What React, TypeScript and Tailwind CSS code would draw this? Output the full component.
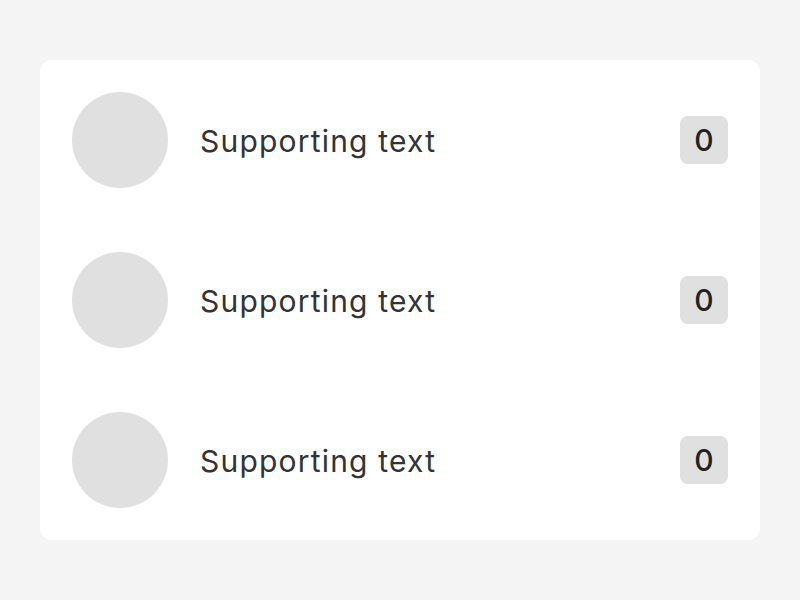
export default function App() {
  const rows = [0, 1, 2];
  return (
    <div className="min-h-[600px] w-[800px] bg-[#f4f4f4] p-[40px] pt-[60px]" style={{ fontFamily: "Inter, 'Noto Sans', sans-serif" }}>
      <div className="flex flex-col gap-[64px] rounded-[12px] bg-white p-[32px]">
        {rows.map((r) => (
          <div key={r} className="flex h-[96px] items-center">
            <div className="h-[96px] w-[96px] shrink-0 rounded-full bg-[#e0e0e0]" />
            <div className="ml-[32px] mt-[2px] flex-1 text-[30px] leading-none tracking-[1.2px] text-[#333333]">Supporting text</div>
            <div className="flex h-[48px] w-[48px] items-center justify-center rounded-[8px] bg-[#e0e0e0] text-[30px] font-medium leading-none text-[#222222]">0</div>
          </div>
        ))}
      </div>
    </div>
  );
}
